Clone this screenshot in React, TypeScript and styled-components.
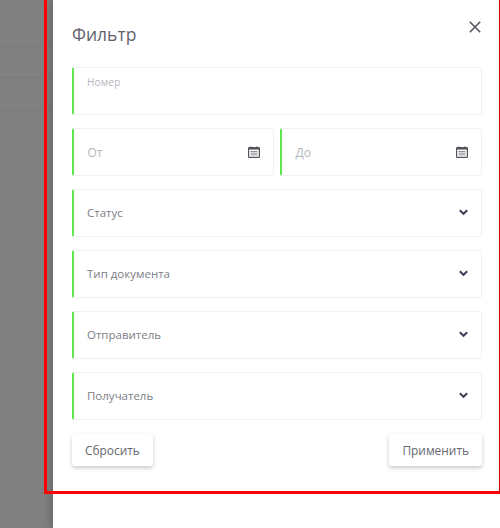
import styled, { createGlobalStyle } from "styled-components";

const GlobalStyle = createGlobalStyle`
	html, body {
		margin: 0;
		padding: 0;
		background: #fff;
		font-family: "Open Sans", "Liberation Sans", sans-serif;
	}
`;

const Page = styled.div`
	position: relative;
	display: flex;
	width: 500px;
	height: 528px;
	overflow: hidden;
`;

const Backdrop = styled.div`
	flex: 0 0 53px;
	display: flex;
	flex-direction: column;
	background: #808080;
	padding-top: 46px;
`;

const BackdropRow = styled.div<{ $height: number }>`
	height: ${({ $height }) => $height}px;
	border-top: 1px solid #797979;
`;

const Drawer = styled.div`
	flex: 1;
	display: flex;
	flex-direction: column;
	padding: 0 18px 0 19px;
	box-sizing: border-box;
	background: #fff;
	box-shadow: -3px 0 8px rgba(0, 0, 0, 0.2);
`;

const Header = styled.div`
	display: flex;
	justify-content: space-between;
	align-items: flex-start;
	height: 67px;
`;

const Title = styled.h2`
	margin: 22px 0 0;
	font-size: 17.5px;
	line-height: 24px;
	font-weight: 400;
	color: #63646e;
`;

const CloseButton = styled.button`
	display: flex;
	margin: 21px 1.5px 0 0;
	padding: 0;
	border: none;
	background: none;
	cursor: pointer;
`;

const Fields = styled.div`
	display: flex;
	flex-direction: column;
	gap: 13px;
`;

const DateRow = styled.div`
	display: grid;
	grid-template-columns: 1fr 1fr;
	column-gap: 6px;
`;

const Field = styled.div<{ $small?: boolean }>`
	display: flex;
	align-items: ${({ $small }) => ($small ? "flex-start" : "center")};
	justify-content: space-between;
	height: 48px;
	padding: ${({ $small }) => ($small ? "6px 13px 0" : "0 13px")};
	box-sizing: border-box;
	border: 1px solid #f0f1f3;
	border-left: 2px solid #5fe84f;
	border-radius: 2px;
	background: #fff;
`;

const FieldLabel = styled.span`
	font-size: 11.5px;
	line-height: 16px;
	color: #7d7e85;
`;

const NumberLabel = styled(FieldLabel)`
	font-size: 10px;
	letter-spacing: 0.2px;
	color: #b5b6bd;
`;

const DateLabel = styled(FieldLabel)`
	margin: 2px 0 0 0.5px;
	font-size: 12px;
	color: #b5b6bd;
`;

const DateIcon = styled.svg`
	margin-top: -1px;
`;

const Chevron = styled.svg`
	margin-top: -2px;
`;

const Footer = styled.div`
	display: flex;
	justify-content: space-between;
	margin-top: 14px;
`;

const Button = styled.button`
	height: 32px;
	padding: 0 13px;
	border: none;
	border-radius: 3px;
	background: #fff;
	box-shadow: 0 2px 4px rgba(0, 0, 0, 0.22);
	font-family: inherit;
	font-size: 11.9px;
	color: #66676e;
	cursor: pointer;
`;

const RedFrame = styled.div`
	position: absolute;
	left: 44px;
	top: -10px;
	width: 456px;
	height: 504px;
	box-sizing: border-box;
	border-left: 3px solid #f00;
	border-bottom: 3px solid #f00;
	border-right: 1px solid #d00;
	pointer-events: none;
`;

const CalendarIcon = () => (
	<DateIcon width="12" height="12" viewBox="0 0 12 12">
		<path d="M3 0.5v1.5M9 0.5v1.5" stroke="#55565e" strokeWidth="1.2" />
		<rect x="0.6" y="1.6" width="10.8" height="9.8" rx="0.6" fill="none" stroke="#55565e" strokeWidth="1.2" />
		<rect x="1" y="2" width="10" height="1.6" fill="#55565e" />
		<path d="M2.5 5.5h7M2.5 7.2h7M2.5 8.9h7" stroke="#8d8e94" strokeWidth="1" />
	</DateIcon>
);

const ChevronIcon = () => (
	<Chevron width="9" height="7" viewBox="0 0 9 7">
		<path d="M0.8 1.2l3.7 3.6 3.7-3.6" fill="none" stroke="#3a4152" strokeWidth="2" />
	</Chevron>
);

const CloseIcon = () => (
	<svg width="12" height="12" viewBox="0 0 12 12">
		<path d="M0.8 0.8l10.4 10.4M11.2 0.8L0.8 11.2" stroke="#55565e" strokeWidth="1.6" />
	</svg>
);

const selects = ["Статус", "Тип документа", "Отправитель", "Получатель"];

export default function App() {
	return (
		<Page>
			<GlobalStyle />
			<Backdrop>
				<BackdropRow $height={30} />
				<BackdropRow $height={32} />
				<BackdropRow $height={400} />
			</Backdrop>
			<Drawer>
				<Header>
					<Title>Фильтр</Title>
					<CloseButton>
						<CloseIcon />
					</CloseButton>
				</Header>
				<Fields>
					<Field $small>
						<NumberLabel>Номер</NumberLabel>
					</Field>
					<DateRow>
						<Field>
							<DateLabel>От</DateLabel>
							<CalendarIcon />
						</Field>
						<Field>
							<DateLabel>До</DateLabel>
							<CalendarIcon />
						</Field>
					</DateRow>
					{selects.map((label) => (
						<Field key={label}>
							<FieldLabel>{label}</FieldLabel>
							<ChevronIcon />
						</Field>
					))}
				</Fields>
				<Footer>
					<Button>Сбросить</Button>
					<Button>Применить</Button>
				</Footer>
			</Drawer>
			<RedFrame />
		</Page>
	);
}
